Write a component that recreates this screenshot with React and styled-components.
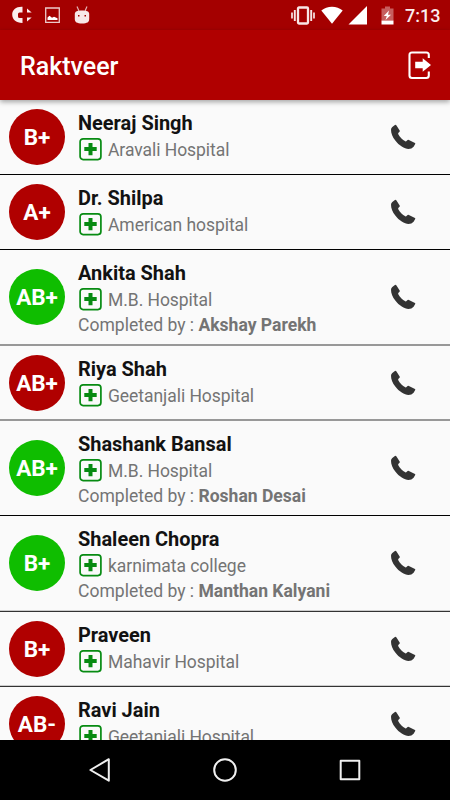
import React from "react";
import styled, { createGlobalStyle } from "styled-components";

const GlobalStyle = createGlobalStyle`
  * { box-sizing: border-box; }
  body { margin: 0; background: #fafafa; }
`;

const Screen = styled.div`
  width: 450px;
  height: 800px;
  display: flex;
  flex-direction: column;
  overflow: hidden;
  background: #fafafa;
  font-family: Roboto, sans-serif;
`;

const StatusBar = styled.header`
  flex: none;
  height: 30px;
  display: flex;
  align-items: center;
  justify-content: space-between;
  padding-left: 12px;
  padding-right: 10px;
  background: #a40000;
  z-index: 1;
`;

const StatusGroup = styled.div`
  display: flex;
  align-items: center;
`;

const StatusIcon = styled.svg`
  display: block;
  flex: none;
  margin-left: ${(p) => p.$gap || 0}px;
`;

const Clock = styled.span`
  width: 35px;
  margin-left: 11px;
  padding-top: 2px;
  font-size: 18px;
  line-height: 28px;
  font-weight: 500;
  color: #fbeeee;
  white-space: nowrap;
`;

const AppBar = styled.div`
  flex: none;
  height: 70px;
  display: flex;
  align-items: center;
  justify-content: space-between;
  padding: 0 18px 0 20px;
  background: #b00000;
  box-shadow: 0 2px 5px rgba(0, 0, 0, 0.35);
  z-index: 1;
`;

const Title = styled.h1`
  margin: 0;
  padding-top: 4px;
  font-size: 25px;
  line-height: 32px;
  font-weight: 500;
  color: #fff;
`;

const LogoutButton = styled.button`
  padding: 0;
  border: 0;
  background: none;
  display: flex;
`;

const List = styled.main`
  flex: 1;
  min-height: 0;
  overflow: hidden;
`;

const Row = styled.article`
  height: ${(p) => p.$height}px;
  display: flex;
  align-items: center;
  padding: 0 34px 0 9px;
`;

const Divider = styled.div`
  height: ${(p) => (p.$soft ? 2 : 1)}px;
  background: ${(p) => (p.$soft ? `linear-gradient(${p.$soft[0]} 50%, ${p.$soft[1]} 50%)` : "#000")};
`;

const Badge = styled.div`
  flex: none;
  width: 56px;
  height: 56px;
  border-radius: 50%;
  display: flex;
  align-items: center;
  justify-content: center;
  background: ${(p) => (p.$done ? "#0fbd00" : "#b00000")};
  color: #fff;
  font-size: 22.5px;
  line-height: 26px;
  font-weight: 700;
`;

const Details = styled.div`
  flex: 1;
  align-self: flex-start;
  margin-left: 13px;
  padding-top: 10px;
  white-space: nowrap;
`;

const Name = styled.h2`
  margin: 0;
  font-size: 19.95px;
  line-height: 26px;
  font-weight: 700;
  color: #121212;
`;

const Place = styled.div`
  height: 26px;
  display: flex;
  align-items: center;
  gap: 5px;
  color: #747474;
  font-size: 17.5px;
  line-height: 26px;
  letter-spacing: -0.05px;
`;

const Completed = styled.div`
  font-size: 17.55px;
  line-height: 26px;
  color: #747474;
`;

const CallButton = styled.button`
  padding: 0;
  border: 0;
  background: none;
  display: flex;
`;

const NavBar = styled.nav`
  flex: none;
  height: 60px;
  display: flex;
  align-items: center;
  justify-content: center;
  gap: 101px;
  background: #000;
`;

const NavIcon = styled.svg`
  display: block;
  width: 24px;
  height: 24px;
  fill: none;
  stroke: #f0f0f0;
  stroke-width: 2;
  stroke-linejoin: round;
`;

const PlaceName = styled.span`
  padding-top: 1px;
`;

const CrossIcon = () => (
  <svg width="25" height="24" viewBox="0 0 25 24">
    <rect x="2.1" y="1.800" width="20.8" height="20.8" rx="3" fill="none" stroke="#078b12" strokeWidth="1.7" />
    <path d="M10.500 5.900h4v4.200h4.200v4h-4.200v4.200h-4v-4.200H6.300v-4h4.200z" fill="#078b12" />
  </svg>
);

const PhoneIcon = () => (
  <svg width="26" height="26" viewBox="0 0 26 26">
    <path
      d="M4.900 .9Q5.700 .3 6.300 1.200L9.800 6.700Q10 7.200 9.500 7.700L8.300 9Q8 9.400 8.300 10.200C9.600 13 12.500 15.900 15.300 17.300Q15.800 17.500 16.200 17.200L17.600 16Q18.200 15.500 18.900 15.900L25 19.100Q25.500 19.500 25.200 20.100L23.600 22.700Q21.700 24.900 18.500 24.900C14.500 24.900 9 21.400 5.300 16.500C2.600 13 1 9.200 1 5.700Q1 4.300 2.300 3.100z"
      fill="#333"
    />
  </svg>
);

const people = [
  { name: "Neeraj Singh", group: "B+", place: "Aravali Hospital", height: 74 },
  { name: "Dr. Shilpa", group: "A+", place: "American hospital", height: 74 },
  { name: "Ankita Shah", group: "AB+", place: "M.B. Hospital", by: "Akshay Parekh", height: 94, soft: ["#989898", "#989898"] },
  { name: "Riya Shah", group: "AB+", place: "Geetanjali Hospital", height: 73, soft: ["#989898", "#989898"] },
  { name: "Shashank Bansal", group: "AB+", place: "M.B. Hospital", by: "Roshan Desai", height: 94 },
  { name: "Shaleen Chopra", group: "B+", place: "karnimata college", by: "Manthan Kalyani", height: 94, soft: ["#ccc", "#333"] },
  { name: "Praveen", group: "B+", place: "Mahavir Hospital", height: 73, soft: ["#ccc", "#333"] },
  { name: "Ravi Jain", group: "AB-", place: "Geetanjali Hospital", height: 74 },
];

export default function App() {
  return (
    <Screen>
      <GlobalStyle />
      <StatusBar>
        <StatusGroup>
          <StatusIcon width="21" height="18" viewBox="0 0 21 18" fill="#fbeeee">
            <path d="M10.500 .8C4 .5 .2 4 .2 8.500s3.600 8.500 10.300 8.500V12H7.500Q6 12 6 10.500V8Q6 6.500 7.500 6.500h3zM15 2.500l4.700 4H15zM15 11.500h4.700L15 15.500z" />
          </StatusIcon>
          <StatusIcon $gap={12} width="15" height="16" viewBox="0 0 15 16">
            <path d="M.7 1h13.600v14.300H.7z" fill="none" stroke="#eccaca" strokeWidth="1.300" />
            <path d="M2.500 13v-2.500l2-1.700 2.500 2 2-1 3.500 1.500V13z" fill="#fff" />
          </StatusIcon>
          <StatusIcon $gap={14} width="16" height="18" viewBox="0 0 16 18">
            <path d="M3 .5l2 4.500M13 .5l-2 4.500" stroke="#e4b4b4" strokeWidth="1.200" />
            <path d="M.8 8C.8 5 4 4.500 8 4.500s7.200 .5 7.200 3.500V13c0 3-2 4.500-7.200 4.500S.8 16 .8 13z" fill="#f7e8e8" />
            <path d="M4 9h1.500v1.500H4zM10.500 9H12v1.500h-1.500z" fill="#a40000" />
          </StatusIcon>
        </StatusGroup>
        <StatusGroup>
          <StatusIcon width="24" height="19" viewBox="0 0 24 19" fill="none" stroke="#f8e6e6">
            <rect x="7" y="1.500" width="10" height="16" rx="1" strokeWidth="2.300" />
            <path d="M3.800 4v11M20.200 4v11" strokeWidth="1.900" />
            <path d="M1 6.500v6M23 6.500v6" strokeWidth="1.700" />
          </StatusIcon>
          <StatusIcon $gap={6} width="22" height="18" viewBox="0 0 22 18">
            <path d="M.3 4.500C6-.6 16-.6 21.700 4.500L11 17.800z" fill="#fff" />
          </StatusIcon>
          <StatusIcon $gap={5} width="20" height="20" viewBox="0 0 20 20">
            <path d="M19 1v18.500H.5z" fill="#fff" />
          </StatusIcon>
          <StatusIcon $gap={13} width="13" height="19" viewBox="0 0 13 19">
            <path d="M4 .5h5V2.500h3.500v12H.5v-12H4z" fill="#c75f5f" />
            <path d="M.5 14.500h12v4H.5zM8 4.500L2.800 10h3L4.500 14 10 8.800H7z" fill="#fff" />
          </StatusIcon>
          <Clock>7:13</Clock>
        </StatusGroup>
      </StatusBar>
      <AppBar>
        <Title>Raktveer</Title>
        <LogoutButton aria-label="Log out">
          <svg width="25" height="30" viewBox="0 0 25 30">
            <path d="M21.800 8V5q0-2.500-2.500-2.500H5Q2.500 2.500 2.500 5v20.500q0 2.500 2.500 2.500h14.300q2.500 0 2.500-2.500v-4" fill="none" stroke="#fff" strokeWidth="2.100" />
            <path d="M8.200 11.700h7.500V8.200l8.300 6.800-8.300 6.800v-3.500H8.200z" fill="#fff" />
          </svg>
        </LogoutButton>
      </AppBar>
      <List>
        {people.map((person) => (
          <React.Fragment key={person.name}>
            <Row $height={person.height}>
              <Badge $done={Boolean(person.by)}>{person.group}</Badge>
              <Details>
                <Name>{person.name}</Name>
                <Place>
                  <CrossIcon />
                  <PlaceName>{person.place}</PlaceName>
                </Place>
                {person.by && (
                  <Completed>
                    Completed by : <b>{person.by}</b>
                  </Completed>
                )}
              </Details>
              <CallButton aria-label={`Call ${person.name}`}>
                <PhoneIcon />
              </CallButton>
            </Row>
            <Divider $soft={person.soft} />
          </React.Fragment>
        ))}
      </List>
      <NavBar>
        <NavIcon viewBox="0 0 24 24">
          <path d="M20.800 1.200v21.500L2.400 12z" />
        </NavIcon>
        <NavIcon viewBox="0 0 24 24">
          <circle cx="12" cy="12" r="10.800" />
        </NavIcon>
        <NavIcon viewBox="0 0 24 24">
          <rect x="2.700" y="2.700" width="18.600" height="18.600" />
        </NavIcon>
      </NavBar>
    </Screen>
  );
}
